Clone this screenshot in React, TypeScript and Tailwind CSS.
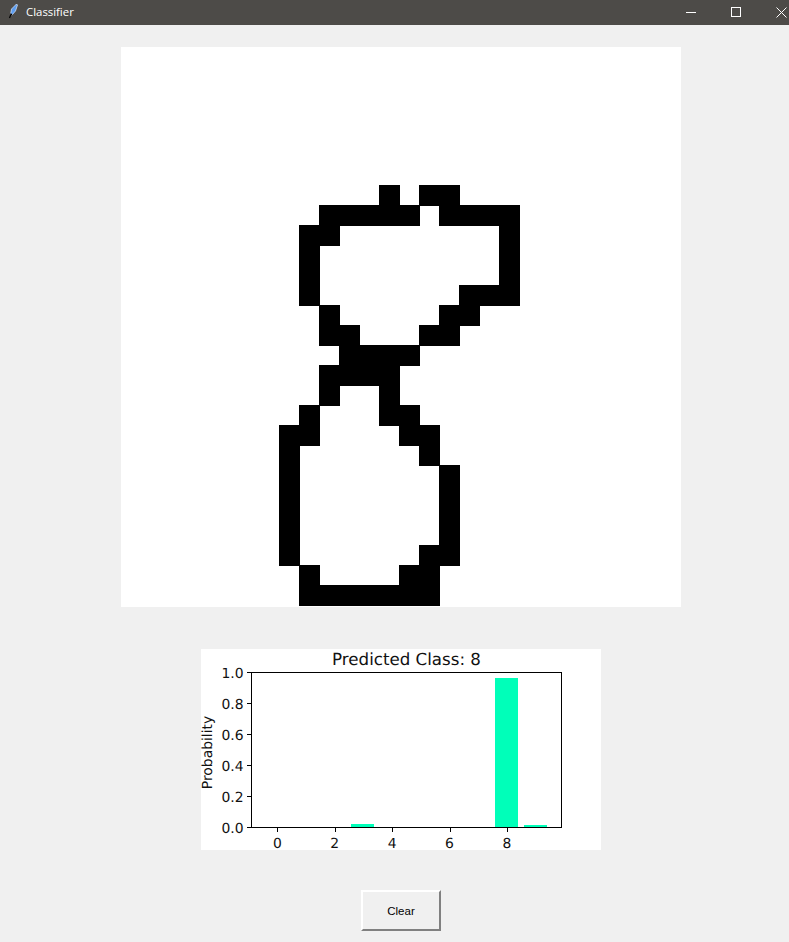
import React from 'react';

// Each row of the drawing canvas: [row, startCol, endCol]. Cells are 20px plus a 1px outline.
const STROKES: [number, number, number][] = [
  [7, 13, 14], [7, 15, 17],
  [8, 10, 15], [8, 16, 20],
  [9, 9, 11], [9, 19, 20],
  [10, 9, 10], [10, 19, 20],
  [11, 9, 10], [11, 19, 20],
  [12, 9, 10], [12, 17, 20],
  [13, 10, 11], [13, 16, 18],
  [14, 10, 12], [14, 15, 17],
  [15, 11, 15],
  [16, 10, 14],
  [17, 10, 11], [17, 13, 14],
  [18, 9, 10], [18, 13, 15],
  [19, 8, 10], [19, 14, 16],
  [20, 8, 9], [20, 15, 16],
  [21, 8, 9], [21, 16, 17],
  [22, 8, 9], [22, 16, 17],
  [23, 8, 9], [23, 16, 17],
  [24, 8, 9], [24, 16, 17],
  [25, 8, 9], [25, 15, 17],
  [26, 9, 10], [26, 14, 16],
  [27, 9, 16],
];

function TitleBar() {
  return (
    <div className="flex h-[25px] w-full items-center bg-[#4d4b48] text-white">
      <svg width="12" height="16" viewBox="0 0 12 16" className="ml-[7px] mb-[3px]">
        <path d="M9.5 1 L10.5 2 L8.5 8 L5 12 L3.5 11.5 L4.5 6 Z" fill="#5b9cf0" stroke="#dbe8fa" strokeWidth="0.7" />
        <path d="M2.5 15 L4 11 L5 12" fill="none" stroke="#000" strokeWidth="1.2" />
      </svg>
      <span className="ml-[7px] mb-[2px] font-['Open_Sans',sans-serif] text-[11.4px] leading-none">Classifier</span>
      <div className="ml-auto mb-[1px] flex items-center">
        <div className="h-px w-[10px] bg-white" />
        <div className="ml-[35px] h-[10px] w-[10px] border border-white" />
        <svg width="11" height="11" viewBox="0 0 11 11" className="ml-[35px] mr-[2px]">
          <path d="M0.5 0.5 L10.5 10.5 M10.5 0.5 L0.5 10.5" stroke="#fff" strokeWidth="1" />
        </svg>
      </div>
    </div>
  );
}

function DrawCanvas() {
  return (
    <svg width="560" height="560" viewBox="0 0 560 560" shapeRendering="crispEdges" className="bg-white">
      {STROKES.map(([row, start, end]) => (
        <rect
          key={`${row}-${start}`}
          x={start * 20 - 2}
          y={row * 20 - 2}
          width={(end - start) * 20 + 1}
          height={21}
          fill="#000"
        />
      ))}
    </svg>
  );
}

function Chart() {
  const yTicks = [0, 0.2, 0.4, 0.6, 0.8, 1];
  const xTicks = [0, 2, 4, 6, 8];
  const bars = [
    { x: 150, top: 175, w: 23 },
    { x: 294, top: 29, w: 23 },
    { x: 323, top: 176, w: 23 },
  ];
  return (
    <svg width="400" height="201" viewBox="0 0 400 201" className="overflow-visible bg-white">
      <g fontFamily="'DejaVu Sans', sans-serif" fill="#111" textRendering="geometricPrecision">
        <text x="205.5" y="16" fontSize="16.67" textAnchor="middle">Predicted Class: 8</text>
        {yTicks.map((t) => (
          <text key={t} x="42.5" y={178 - t * 155 + 6} fontSize="13.9" textAnchor="end">{t.toFixed(1)}</text>
        ))}
        {xTicks.map((t) => (
          <text key={t} x={76.3 + t * 28.7} y="199" fontSize="13.9" textAnchor="middle">{t}</text>
        ))}
        <text transform="translate(10.5 103.5) rotate(-90)" fontSize="13.9" textAnchor="middle">Probability</text>
      </g>
      {bars.map((b) => (
        <rect key={b.x} x={b.x} y={b.top} width={b.w} height={178 - b.top} fill="#00ffb9" shapeRendering="crispEdges" />
      ))}
      <g shapeRendering="crispEdges" stroke="#000" strokeWidth="1" fill="none">
        <rect x="50.5" y="23.5" width="310" height="155" />
        {yTicks.map((t) => (
          <path key={t} d={`M46 ${Math.round(178 - t * 155) + 0.5} H50`} />
        ))}
        {xTicks.map((t) => (
          <path key={t} d={`M${Math.round(76.3 + t * 28.7) + 0.5} 179 V183`} />
        ))}
      </g>
    </svg>
  );
}

export default function App() {
  return (
    <div className="h-[942px] w-[789px] overflow-hidden bg-[#f0f0f0]">
      <TitleBar />
      {/* Window content is a little wider than the capture, so it sits off centre */}
      <div className="flex w-[802px] flex-col items-center pt-[22px]">
        <DrawCanvas />
        <div className="mt-[42px]">
          <Chart />
        </div>
        <button
          type="button"
          className="mt-[40px] h-[41px] w-[80px] border-2 border-t-white border-l-white border-r-[#808080] border-b-[#808080] bg-[#f0f0f0] pt-[2px] font-['Liberation_Sans',sans-serif] text-[11.5px] text-black"
        >
          Clear
        </button>
      </div>
    </div>
  );
}
